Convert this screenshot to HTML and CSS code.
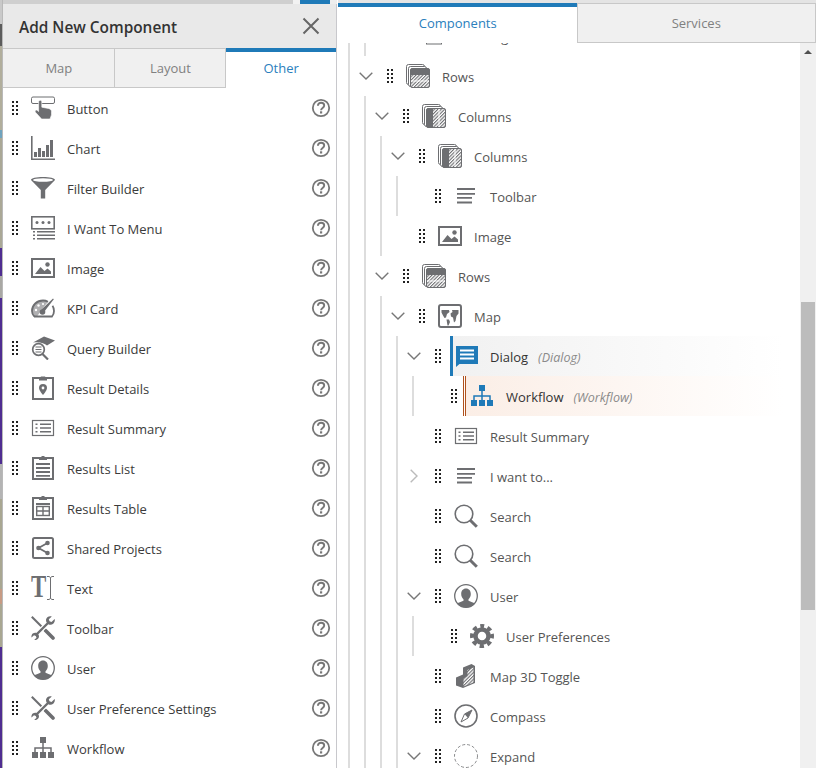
FILE: index.html
```html
<!DOCTYPE html>
<html lang="en">
<head>
<meta charset="utf-8">
<title>Add New Component</title>
<link rel="stylesheet" href="styles.css">
</head>
<body>
<svg class="sprite" xmlns="http://www.w3.org/2000/svg">
  <defs>
    <pattern id="hatch" width="2.4" height="2.4" patternUnits="userSpaceOnUse" patternTransform="rotate(45)">
      <rect width="2.4" height="2.4" fill="#fff"/>
      <rect width="1.1" height="2.4" fill="#6d6e71"/>
    </pattern>
  </defs>
  <symbol id="grip" viewBox="0 0 6 14"><g fill="#222"><rect x="0" y="0" width="2" height="2"/><rect x="4" y="0" width="2" height="2"/><rect x="0" y="4" width="2" height="2"/><rect x="4" y="4" width="2" height="2"/><rect x="0" y="8" width="2" height="2"/><rect x="4" y="8" width="2" height="2"/><rect x="0" y="12" width="2" height="2"/><rect x="4" y="12" width="2" height="2"/></g></symbol>
  <symbol id="help" viewBox="0 0 20 20"><circle cx="10" cy="10" r="8.2" fill="none" stroke="#777" stroke-width="1.8"/><path d="M6.9 7.8c0-2 1.4-3 3.2-3s3.1 1 3.1 2.7c0 2.4-3.1 2.5-3.1 4.7" fill="none" stroke="#777" stroke-width="1.9"/><rect x="9" y="13.3" width="2.2" height="2.2" fill="#777"/></symbol>
  <symbol id="chev" viewBox="0 0 14 8"><path d="M.7.7 7 7 13.3.7" fill="none" stroke="currentColor" stroke-width="1.4"/></symbol>
  <symbol id="chev-r" viewBox="0 0 8 14"><path d="M.7.7 7 7 .7 13.3" fill="none" stroke="currentColor" stroke-width="1.4"/></symbol>
  <symbol id="i-button" viewBox="0 0 24 24"><rect x=".5" y="1" width="23" height="6.5" rx="1.5" fill="none" stroke="currentColor"/><path d="M7.6 5.8a1.6 1.6 0 0 1 3.2 0v5.4l6.7 1.3c2 .5 3 1.600 3 3.200v3.200L19 23H10.600L4.400 16.200c-1-1.300.6-2.800 2-1.700L7.600 15.500Z" fill="currentColor" stroke="#fff" stroke-width=".6"/></symbol>
  <symbol id="i-chart" viewBox="0 0 24 24"><path d="M.8 0V23.200H24" fill="none" stroke="currentColor" stroke-width="1.600"/><path d="M3 16h3v5H3zM7 12h3v9H7zM11 15h3v6h-3zM15 9h3v12h-3zM19 4h3v17h-3z" fill="currentColor"/></symbol>
  <symbol id="i-filter" viewBox="0 0 24 24"><path d="M0 4c0-2 5.500-3 12-3s12 1 12 3l-9.800 10v8.500H9.800V14Z" fill="currentColor"/><ellipse cx="12" cy="4" rx="10" ry="1.700" fill="#fff"/></symbol>
  <symbol id="i-menu" viewBox="0 0 24 24"><rect x=".8" y=".8" width="22.400" height="12" fill="none" stroke="currentColor" stroke-width="1.600"/><circle cx="6" cy="6.500" r="1.500" fill="currentColor"/><circle cx="12" cy="6.500" r="1.500" fill="currentColor"/><circle cx="18" cy="6.500" r="1.500" fill="currentColor"/><path d="M2 15h2v1.500H2zM6 15h18v1.500H6zM2 18.500h2V20H2zM6 18.500h18V20H6zM2 22h2v1.500H2zM6 22h18v1.500H6z" fill="currentColor"/></symbol>
  <symbol id="i-image" viewBox="0 0 24 24"><rect x="1" y="3" width="22" height="18" fill="none" stroke="currentColor" stroke-width="2"/><path d="M4 18 9.500 11l4 4 3-2.500L20 15.500V18Z" fill="currentColor"/><circle cx="16.500" cy="8.500" r="2.200" fill="currentColor"/></symbol>
  <symbol id="i-kpi" viewBox="0 0 24 24"><path d="M3 20.500C1.800 19 1 17 1 15 1 9 6 4.500 12 4.500c2 0 3.500.4 5 1.200l-5 6.300-6 8.500Z" fill="currentColor" opacity=".55"/><path d="M3.200 20.500C1.800 19 1 17 1 15 1 9 6 4.500 12 4.500c2 0 3.500.4 5 1.200" fill="none" stroke="currentColor" stroke-width="1.800"/><path d="M21.500 9.800c1 1.500 1.500 3.300 1.500 5.200 0 2-.7 4-2 5.500H3" fill="none" stroke="currentColor" stroke-width="1.800"/><path d="M10.500 13.500 22 2.500l.8.8-9.600 12.500Z" fill="currentColor"/><circle cx="11.500" cy="16" r="2.800" fill="currentColor"/><circle cx="5" cy="14" r="1.200" fill="#fff"/><circle cx="7.500" cy="9.500" r="1.200" fill="#fff"/><circle cx="12" cy="8" r="1.100" fill="#fff"/></symbol>
  <symbol id="i-query" viewBox="0 0 24 24"><path d="M2 6.500 13 .5 24 4.500 16 9.500C13.500 7 8 5.500 2 6.500Z" fill="currentColor"/><circle cx="7.500" cy="13.500" r="5.800" fill="#fff" stroke="currentColor" stroke-width="1.700"/><path d="M4.500 11h6M4.500 13.500h6M4.500 16h6" stroke="currentColor" stroke-width="1.200"/><path d="M11.500 18 17 23.500" stroke="currentColor" stroke-width="2.200"/></symbol>
  <symbol id="i-details" viewBox="0 0 24 24"><path d="M8 2H2v21h20V2h-6" fill="none" stroke="currentColor" stroke-width="2"/><path d="M8 1h1.800V.5h4.400V1H16v3.500H8Z" fill="currentColor"/><path d="M12 8a4 4 0 0 1 4 4c0 2.500-4 7-4 7s-4-4.500-4-7a4 4 0 0 1 4-4Z" fill="currentColor"/><circle cx="12" cy="12" r="1.400" fill="#fff"/></symbol>
  <symbol id="i-summary" viewBox="0 0 24 24"><rect x="1.500" y="4.500" width="21" height="15" fill="none" stroke="currentColor" stroke-width="1.200"/><path d="M4.500 7.500h2v1.500h-2zM9 7.500h11v1.500H9zM4.500 11.200h2v1.500h-2zM9 11.200h11v1.500H9zM4.500 15h2v1.500h-2zM9 15h11v1.500H9z" fill="currentColor"/></symbol>
  <symbol id="i-list" viewBox="0 0 24 24"><path d="M8 2H2v21h20V2h-6" fill="none" stroke="currentColor" stroke-width="2"/><path d="M8 1h2.500V0h3v1H16v3H8Z" fill="currentColor"/><path d="M5 7h14v2H5zM5 11h14v2H5zM5 15h14v2H5zM5 19h14v1.800H5z" fill="currentColor"/></symbol>
  <symbol id="i-table" viewBox="0 0 24 24"><path d="M8 2H2v21h20V2h-6" fill="none" stroke="currentColor" stroke-width="2"/><path d="M8 1h2.500V0h3v1H16v3H8Z" fill="currentColor"/><path d="M5 7h14v2H5z" fill="currentColor"/><rect x="5.700" y="10.500" width="12.600" height="9" fill="none" stroke="currentColor" stroke-width="1.400"/><path d="M5 15h14M12 10v10" stroke="currentColor" stroke-width="1.400"/></symbol>
  <symbol id="i-share" viewBox="0 0 24 24"><rect x="2" y="2" width="20" height="20" rx="1.500" fill="none" stroke="currentColor" stroke-width="2"/><path d="M16.500 7 7.500 12l9 5" fill="none" stroke="currentColor" stroke-width="1.800"/><circle cx="16.500" cy="7" r="2.300" fill="currentColor"/><circle cx="7.500" cy="12" r="2.300" fill="currentColor"/><circle cx="16.500" cy="17" r="2.300" fill="currentColor"/></symbol>
  <symbol id="i-tools" viewBox="0 0 24 24"><path d="M.8.800 14 14" stroke="currentColor" stroke-width="2" fill="none"/><path d="M14.500 14.500 22 22" stroke="currentColor" stroke-width="3.600" stroke-linecap="round" fill="none"/><path d="M5 19 18 6" stroke="#fff" stroke-width="4.600" fill="none"/><path d="M5 19 18 6" stroke="currentColor" stroke-width="2.400" fill="none"/><path d="M23.600 3 20.500 6l-2-.7-.7-2L20.800.4c-2.600-.8-5 .4-5.600 2.600-.4 1.300-.1 2.600.5 3.500l2 1.900c1.500.6 3.300.4 4.500-.7 1.400-1.300 2-3.200 1.400-4.700Z" fill="currentColor"/><path d="M.5 21.500 3 19.300l1.800.6.700 1.800L3.200 24c2.200.4 4-.6 4.600-2.400.3-1.100.2-2.200-.4-3l-1.700-1.700c-1.300-.5-2.800-.3-3.900.6C.7 18.400.2 20 .5 21.500Z" fill="currentColor"/></symbol>
  <symbol id="i-user" viewBox="0 0 24 24"><circle cx="12" cy="12" r="11.300" fill="none" stroke="currentColor" stroke-width="1.300"/><path d="M12 4.500c3 0 4.800 2.300 4.800 5.500 0 2.300-1 4.200-2.300 5.300v1.500c2.500 1 5 1.800 6.300 2.900A11 11 0 0 1 12 23.500a11 11 0 0 1-8.800-3.800c1.300-1.100 3.800-1.900 6.300-2.900v-1.500C8.200 14.200 7.200 12.300 7.200 10c0-3.200 1.800-5.500 4.800-5.500Z" fill="currentColor"/></symbol>
  <symbol id="i-flow" viewBox="0 0 24 24"><path d="M9 1h6v6H9zM1 16h6v6H1zM9 16h6v6H9zM17 16h6v6h-6z" fill="currentColor"/><path d="M12 7v9M4 16v-4h16v4" fill="none" stroke="currentColor" stroke-width="1.500"/></symbol>
  <symbol id="i-rows" viewBox="0 0 24 24"><rect x=".5" y=".5" width="18" height="20" rx="2" fill="none" stroke="currentColor"/><rect x="2.500" y="2.500" width="18" height="20" rx="2" fill="#fff" stroke="currentColor"/><rect x="4.500" y="4.500" width="19" height="19" rx="1.500" fill="#fff" stroke="currentColor"/><path d="M4.500 6c0-1 .5-1.500 1.500-1.500h16c1 0 1.500.5 1.500 1.500v5h-19Z" fill="currentColor"/><rect x="5" y="11" width="18" height="5.500" fill="url(#hatch)"/><rect x="5" y="17.500" width="18" height="5.500" fill="url(#hatch)"/></symbol>
  <symbol id="i-cols" viewBox="0 0 24 24"><rect x=".5" y=".5" width="18" height="20" rx="2" fill="none" stroke="currentColor"/><rect x="2.500" y="2.500" width="18" height="20" rx="2" fill="#fff" stroke="currentColor"/><rect x="4.500" y="4.500" width="19" height="19" rx="1.500" fill="#fff" stroke="currentColor"/><path d="M6 4.500h5v19H6c-1 0-1.500-.5-1.500-1.500V6c0-1 .5-1.500 1.500-1.500Z" fill="currentColor"/><rect x="11" y="5" width="5.500" height="18" fill="url(#hatch)"/><rect x="17.500" y="5" width="5.500" height="18" fill="url(#hatch)"/></symbol>
  <symbol id="i-lines" viewBox="0 0 24 24"><path d="M3 4h18v2H3zM3 9h18v1.800H3zM3 13h15v1.800H3zM3 17.500h15v2H3z" fill="currentColor"/></symbol>
  <symbol id="i-map" viewBox="0 0 24 24"><rect x="1" y="1" width="22" height="22" rx="2" fill="none" stroke="currentColor" stroke-width="2"/><path d="M3.500 6H11l.5 2-2.500 2-1 3.500-1.500.5L5 11.500 3.500 8.500ZM8.500 15.500h2.500l1 2.500-1.500 3.500H9.500ZM14 6h6.500v3.500L18.500 12l-1 5-1.500 1.500-1-5-2-1-.5-3 2-1.500Z" fill="currentColor"/></symbol>
  <symbol id="i-dialog" viewBox="0 0 24 24"><path d="M2 2h22v18H5.500L2 23Z" fill="currentColor"/><path d="M6 5.500h14v2H6zM6 9.500h14v2H6zM6 13.500h14v2H6z" fill="#fff"/></symbol>
  <symbol id="i-search" viewBox="0 0 24 24"><circle cx="10" cy="10" r="8.800" fill="none" stroke="currentColor" stroke-width="1.600"/><path d="M16 16l6.800 6.800" stroke="currentColor" stroke-width="3"/></symbol>
  <symbol id="i-gear" viewBox="0 0 24 24"><circle cx="12" cy="12" r="6.500" fill="none" stroke="currentColor" stroke-width="4.500"/><circle cx="12" cy="12" r="10" fill="none" stroke="currentColor" stroke-width="4" stroke-dasharray="4.300 3.554" stroke-dashoffset="2.150" transform="rotate(-90 12 12)"/></symbol>
  <symbol id="i-3d" viewBox="0 0 24 24"><path d="M2 13.500 9 10.500V3.500L17.500 0 21 2V19L9 24 2 21.500Z" fill="currentColor"/><path d="M9.500 14.500 13.500 12V6L19.500 3.500V18.500L9.500 22.500Z" fill="url(#hatch)"/></symbol>
  <symbol id="i-compass" viewBox="0 0 24 24"><circle cx="12" cy="12" r="11" fill="none" stroke="currentColor" stroke-width="1.600"/><path d="M18 6 14 14 7 18 10.500 10Z" fill="none" stroke="currentColor"/><path d="M18 6 10.500 10 14 14Z" fill="currentColor"/></symbol>
  <symbol id="i-expand" viewBox="0 0 24 24"><circle cx="12" cy="12" r="11.500" fill="none" stroke="currentColor" stroke-width=".8" stroke-dasharray="3 2"/></symbol>
  <symbol id="i-heading" viewBox="0 0 24 24"><rect x="4.500" y="3" width="15" height="17" fill="none" stroke="currentColor"/><path d="M0 18h3v1H0zM21 18h3v1h-3z" fill="currentColor"/></symbol>
</svg>

<div class="app">
  <div class="edge">
    <span class="e e-grey"></span><span class="e e-dark"></span><span class="e e-sand"></span><span class="e e-blue"></span><span class="e e-sand2"></span><span class="e e-violet"></span><span class="e e-ash"></span><span class="e e-violet2"></span><span class="e e-ash2"></span><span class="e e-sand3"></span><span class="e e-salmon"></span><span class="e e-sand4"></span><span class="e e-violet3"></span>
  </div>

  <section class="panel">
    <div class="panel-top"><span class="pt-a"></span><span class="pt-b"></span><span class="pt-c"></span><span class="pt-d"></span></div>
    <header class="panel-head">
      <h1 class="panel-title">Add New Component</h1>
      <svg class="close" viewBox="0 0 18 18"><path d="M1.500 1.500 16.500 16.500M16.500 1.500 1.500 16.500" stroke="#666" stroke-width="2" fill="none"/></svg>
    </header>
    <div class="ptabs">
      <div class="ptab">Map</div>
      <div class="ptab ptab-mid">Layout</div>
      <div class="ptab ptab-on">Other</div>
    </div>
    <ul class="comp-list">
      <li class="li"><svg class="grip"><use href="#grip"/></svg><svg class="ic"><use href="#i-button"/></svg><span class="li-label">Button</span><svg class="help"><use href="#help"/></svg></li>
      <li class="li"><svg class="grip"><use href="#grip"/></svg><svg class="ic"><use href="#i-chart"/></svg><span class="li-label">Chart</span><svg class="help"><use href="#help"/></svg></li>
      <li class="li"><svg class="grip"><use href="#grip"/></svg><svg class="ic"><use href="#i-filter"/></svg><span class="li-label">Filter Builder</span><svg class="help"><use href="#help"/></svg></li>
      <li class="li"><svg class="grip"><use href="#grip"/></svg><svg class="ic"><use href="#i-menu"/></svg><span class="li-label">I Want To Menu</span><svg class="help"><use href="#help"/></svg></li>
      <li class="li"><svg class="grip"><use href="#grip"/></svg><svg class="ic"><use href="#i-image"/></svg><span class="li-label">Image</span><svg class="help"><use href="#help"/></svg></li>
      <li class="li"><svg class="grip"><use href="#grip"/></svg><svg class="ic"><use href="#i-kpi"/></svg><span class="li-label">KPI Card</span><svg class="help"><use href="#help"/></svg></li>
      <li class="li"><svg class="grip"><use href="#grip"/></svg><svg class="ic"><use href="#i-query"/></svg><span class="li-label">Query Builder</span><svg class="help"><use href="#help"/></svg></li>
      <li class="li"><svg class="grip"><use href="#grip"/></svg><svg class="ic"><use href="#i-details"/></svg><span class="li-label">Result Details</span><svg class="help"><use href="#help"/></svg></li>
      <li class="li"><svg class="grip"><use href="#grip"/></svg><svg class="ic"><use href="#i-summary"/></svg><span class="li-label">Result Summary</span><svg class="help"><use href="#help"/></svg></li>
      <li class="li"><svg class="grip"><use href="#grip"/></svg><svg class="ic"><use href="#i-list"/></svg><span class="li-label">Results List</span><svg class="help"><use href="#help"/></svg></li>
      <li class="li"><svg class="grip"><use href="#grip"/></svg><svg class="ic"><use href="#i-table"/></svg><span class="li-label">Results Table</span><svg class="help"><use href="#help"/></svg></li>
      <li class="li"><svg class="grip"><use href="#grip"/></svg><svg class="ic"><use href="#i-share"/></svg><span class="li-label">Shared Projects</span><svg class="help"><use href="#help"/></svg></li>
      <li class="li"><svg class="grip"><use href="#grip"/></svg><svg class="ic ic-text" viewBox="0 0 24 24"><text class="t-glyph" transform="translate(0 21) scale(.85 1.15)">T</text><path d="M16 .5h2l1.500 1 1.500-1h2M19.500 1.500v21M16 23.500h2l1.500-1 1.500 1h2" fill="none" stroke="currentColor"/></svg><span class="li-label">Text</span><svg class="help"><use href="#help"/></svg></li>
      <li class="li"><svg class="grip"><use href="#grip"/></svg><svg class="ic"><use href="#i-tools"/></svg><span class="li-label">Toolbar</span><svg class="help"><use href="#help"/></svg></li>
      <li class="li"><svg class="grip"><use href="#grip"/></svg><svg class="ic"><use href="#i-user"/></svg><span class="li-label">User</span><svg class="help"><use href="#help"/></svg></li>
      <li class="li"><svg class="grip"><use href="#grip"/></svg><svg class="ic"><use href="#i-tools"/></svg><span class="li-label">User Preference Settings</span><svg class="help"><use href="#help"/></svg></li>
      <li class="li"><svg class="grip"><use href="#grip"/></svg><svg class="ic"><use href="#i-flow"/></svg><span class="li-label">Workflow</span><svg class="help"><use href="#help"/></svg></li>
    </ul>
  </section>

  <section class="main">
    <div class="main-top"></div>
    <div class="mtabs">
      <div class="mtab mtab-on">Components</div>
      <div class="mtab">Services</div>
    </div>
    <div class="tree-wrap">
      <div class="tree-view">
        <div class="tree">
          <div class="kids">
            <div class="node"><span class="chev"></span><svg class="grip"><use href="#grip"/></svg><div class="node-main"><svg class="ic"><use href="#i-heading"/></svg><span class="label">Heading</span></div></div>
          </div>
          <div class="node"><span class="chev"><svg class="chev-d"><use href="#chev"/></svg></span><svg class="grip"><use href="#grip"/></svg><div class="node-main"><svg class="ic"><use href="#i-rows"/></svg><span class="label">Rows</span></div></div>
          <div class="kids">
            <div class="node"><span class="chev"><svg class="chev-d"><use href="#chev"/></svg></span><svg class="grip"><use href="#grip"/></svg><div class="node-main"><svg class="ic"><use href="#i-cols"/></svg><span class="label">Columns</span></div></div>
            <div class="kids">
              <div class="node"><span class="chev"><svg class="chev-d"><use href="#chev"/></svg></span><svg class="grip"><use href="#grip"/></svg><div class="node-main"><svg class="ic"><use href="#i-cols"/></svg><span class="label">Columns</span></div></div>
              <div class="kids">
                <div class="node"><span class="chev"></span><svg class="grip"><use href="#grip"/></svg><div class="node-main"><svg class="ic"><use href="#i-lines"/></svg><span class="label">Toolbar</span></div></div>
              </div>
              <div class="node"><span class="chev"></span><svg class="grip"><use href="#grip"/></svg><div class="node-main"><svg class="ic"><use href="#i-image"/></svg><span class="label">Image</span></div></div>
            </div>
            <div class="node"><span class="chev"><svg class="chev-d"><use href="#chev"/></svg></span><svg class="grip"><use href="#grip"/></svg><div class="node-main"><svg class="ic"><use href="#i-rows"/></svg><span class="label">Rows</span></div></div>
            <div class="kids">
              <div class="node"><span class="chev"><svg class="chev-d"><use href="#chev"/></svg></span><svg class="grip"><use href="#grip"/></svg><div class="node-main"><svg class="ic"><use href="#i-map"/></svg><span class="label">Map</span></div></div>
              <div class="kids">
                <div class="node"><span class="chev"><svg class="chev-d"><use href="#chev"/></svg></span><svg class="grip"><use href="#grip"/></svg><div class="node-main sel-blue"><svg class="ic ic-blue"><use href="#i-dialog"/></svg><span class="label label-on">Dialog</span><em class="hint">(Dialog)</em></div></div>
                <div class="kids">
                  <div class="node"><span class="chev"></span><svg class="grip"><use href="#grip"/></svg><div class="node-main sel-orange"><svg class="ic ic-blue"><use href="#i-flow"/></svg><span class="label label-on">Workflow</span><em class="hint">(Workflow)</em></div></div>
                </div>
                <div class="node"><span class="chev"></span><svg class="grip"><use href="#grip"/></svg><div class="node-main"><svg class="ic"><use href="#i-summary"/></svg><span class="label">Result Summary</span></div></div>
                <div class="node"><span class="chev"><svg class="chev-c"><use href="#chev-r"/></svg></span><svg class="grip"><use href="#grip"/></svg><div class="node-main"><svg class="ic"><use href="#i-lines"/></svg><span class="label">I want to...</span></div></div>
                <div class="node"><span class="chev"></span><svg class="grip"><use href="#grip"/></svg><div class="node-main"><svg class="ic"><use href="#i-search"/></svg><span class="label">Search</span></div></div>
                <div class="node"><span class="chev"></span><svg class="grip"><use href="#grip"/></svg><div class="node-main"><svg class="ic"><use href="#i-search"/></svg><span class="label">Search</span></div></div>
                <div class="node"><span class="chev"><svg class="chev-d"><use href="#chev"/></svg></span><svg class="grip"><use href="#grip"/></svg><div class="node-main"><svg class="ic"><use href="#i-user"/></svg><span class="label">User</span></div></div>
                <div class="kids">
                  <div class="node"><span class="chev"></span><svg class="grip"><use href="#grip"/></svg><div class="node-main"><svg class="ic"><use href="#i-gear"/></svg><span class="label">User Preferences</span></div></div>
                </div>
                <div class="node"><span class="chev"></span><svg class="grip"><use href="#grip"/></svg><div class="node-main"><svg class="ic"><use href="#i-3d"/></svg><span class="label">Map 3D Toggle</span></div></div>
                <div class="node"><span class="chev"></span><svg class="grip"><use href="#grip"/></svg><div class="node-main"><svg class="ic"><use href="#i-compass"/></svg><span class="label">Compass</span></div></div>
                <div class="node"><span class="chev"><svg class="chev-d"><use href="#chev"/></svg></span><svg class="grip"><use href="#grip"/></svg><div class="node-main"><svg class="ic"><use href="#i-expand"/></svg><span class="label">Expand</span></div></div>
              </div>
            </div>
          </div>
        </div>
      </div>
      <div class="vbar">
        <div class="vbar-arrow"></div>
        <div class="vbar-thumb"></div>
      </div>
    </div>
  </section>
</div>
</body>
</html>
```
FILE: styles.css
```css
* { box-sizing: border-box; }
html, body { margin: 0; padding: 0; height: 100%; overflow: hidden; background: #fff; }
body { font-family: "Open Sans", "Noto Sans", sans-serif; font-size: 13px; color: #333; }
.sprite { display: block; width: 0; height: 0; }
.app { display: flex; height: 768px; width: 816px; }

.edge { width: 3px; flex: none; display: flex; flex-direction: column; border-right: 1px solid #b9b9b9; }
.e { display: block; }
.e-grey { height: 24px; background: #c9c9c9; }
.e-dark { height: 22px; background: #5c5c5c; }
.e-sand { height: 84px; background: #b1ae9c; }
.e-blue { height: 8px; background: #6fa3bd; }
.e-sand2 { height: 110px; background: #aaa896; }
.e-violet { height: 28px; background: #4f2d91; }
.e-ash { height: 22px; background: #a9a8a4; }
.e-violet2 { height: 166px; background: #4f2d91; }
.e-ash2 { height: 35px; background: #b4b4b4; }
.e-sand3 { height: 90px; background: #a9a792; }
.e-salmon { height: 15px; background: #c79b84; }
.e-sand4 { height: 43px; background: #a9a792; }
.e-violet3 { flex: 1; background: #4f2d91; }

.panel { width: 334px; flex: none; display: flex; flex-direction: column; border-right: 1px solid #c8c8cc; }
.panel-top { height: 4px; display: flex; flex: none; margin-right: -1px; }
.pt-a { width: 290px; background: #cfcfcf; }
.pt-b { width: 7px; background: #f2f2f2; }
.pt-c { width: 30px; background: #1f7ab8; }
.pt-d { flex: 1; background: #eee; }
.panel-head { height: 44px; flex: none; background: #e9e9e9; display: flex; align-items: center; justify-content: space-between; padding: 2px 16px 0 16px; }
.panel-title { margin: 0; font-size: 15.400px; font-weight: 600; color: #333; }
.close { width: 18px; height: 18px; display: block; margin-top: -2px; }

.ptabs { height: 40px; flex: none; display: flex; }
.ptab { flex: 1; display: flex; align-items: center; justify-content: center; padding-left: 1px; background: #f0f0f0; color: #808080; border-top: 1px solid #c8c8c8; border-bottom: 1px solid #c8c8c8; }
.ptab-mid { border-left: 1px solid #c8c8c8; border-right: 1px solid #c8c8c8; }
.ptab-on { background: #fff; color: #2a80bd; border-top: 4px solid #1f7ab8; border-bottom: none; padding: 0 0 4px; }

.comp-list { list-style: none; margin: 0; padding: 0; flex: 1; overflow: hidden; }
.li { height: 40px; display: flex; align-items: center; padding: 0 5px 0 9px; }
.grip { width: 6px; height: 14px; flex: none; display: block; }
.ic { width: 24px; height: 24px; flex: none; display: block; color: #6d6e71; }
.ic-blue { color: #1f7ab8; }
.ic-text { overflow: visible; }
.li .ic { margin-left: 13px; }
.li-label { margin-left: 12px; flex: 1; padding-top: 2px; color: #3b3b3b; }
.help { width: 20px; height: 20px; flex: none; display: block; }
.t-glyph { font-family: "Liberation Serif", serif; font-size: 27px; font-weight: 700; fill: currentColor; }

.main { flex: 1; min-width: 0; display: flex; flex-direction: column; margin-left: 1px; }
.main-top { height: 3px; flex: none; background: #e4e4e4; }
.mtabs { height: 40px; flex: none; display: flex; }
.mtab { flex: 1; display: flex; align-items: center; justify-content: center; background: #f0f0f0; color: #808080; border: 1px solid #c8c8c8; }
.mtab-on { background: #fff; color: #2a80bd; border: none; border-top: 4px solid #1f7ab8; padding: 0 0 5px 1px; }

.tree-wrap { flex: 1; min-height: 0; display: flex; }
.tree-view { flex: 1; min-width: 0; overflow: hidden; }
.tree { margin: -27px 0 0 10px; border-left: 2px solid #ddd; }
.kids { margin-left: 14px; border-left: 2px solid #ddd; }
.node { height: 40px; display: flex; align-items: center; }
.chev { width: 32px; height: 40px; flex: none; display: flex; align-items: center; justify-content: center; color: #777; }
.chev-d { width: 14px; height: 8px; display: block; }
.chev-c { width: 8px; height: 14px; display: block; color: #bbb; }
.node .grip { margin-left: 5px; }
.node-main { flex: 1; min-width: 0; height: 40px; margin-left: 9px; padding-left: 4px; display: flex; align-items: center; }
.label { margin-left: 12px; padding-top: 2px; color: #555; }
.label-on { color: #333; }
.hint { margin-left: 10px; padding-top: 2px; font-size: 12.500px; color: #8a8a8a; }
.sel-blue { border-left: 3px solid #1f7ab8; padding-left: 1px; background: linear-gradient(to right, #f1f1f1, #fff 95%); }
.sel-orange { margin-left: 6px; border-left: 3px double #b0521e; padding-left: 4px; background: linear-gradient(to right, #fbeee6, #fff 95%); }

.vbar { width: 16px; flex: none; background: #f0f0f0; display: flex; flex-direction: column; align-items: center; }
.vbar-arrow { width: 0; height: 0; margin-top: 7px; border-left: 4px solid transparent; border-right: 4px solid transparent; border-bottom: 4px solid #505050; }
.vbar-thumb { width: 14px; height: 308px; margin-top: 248px; background: #bcbcbc; }
```
